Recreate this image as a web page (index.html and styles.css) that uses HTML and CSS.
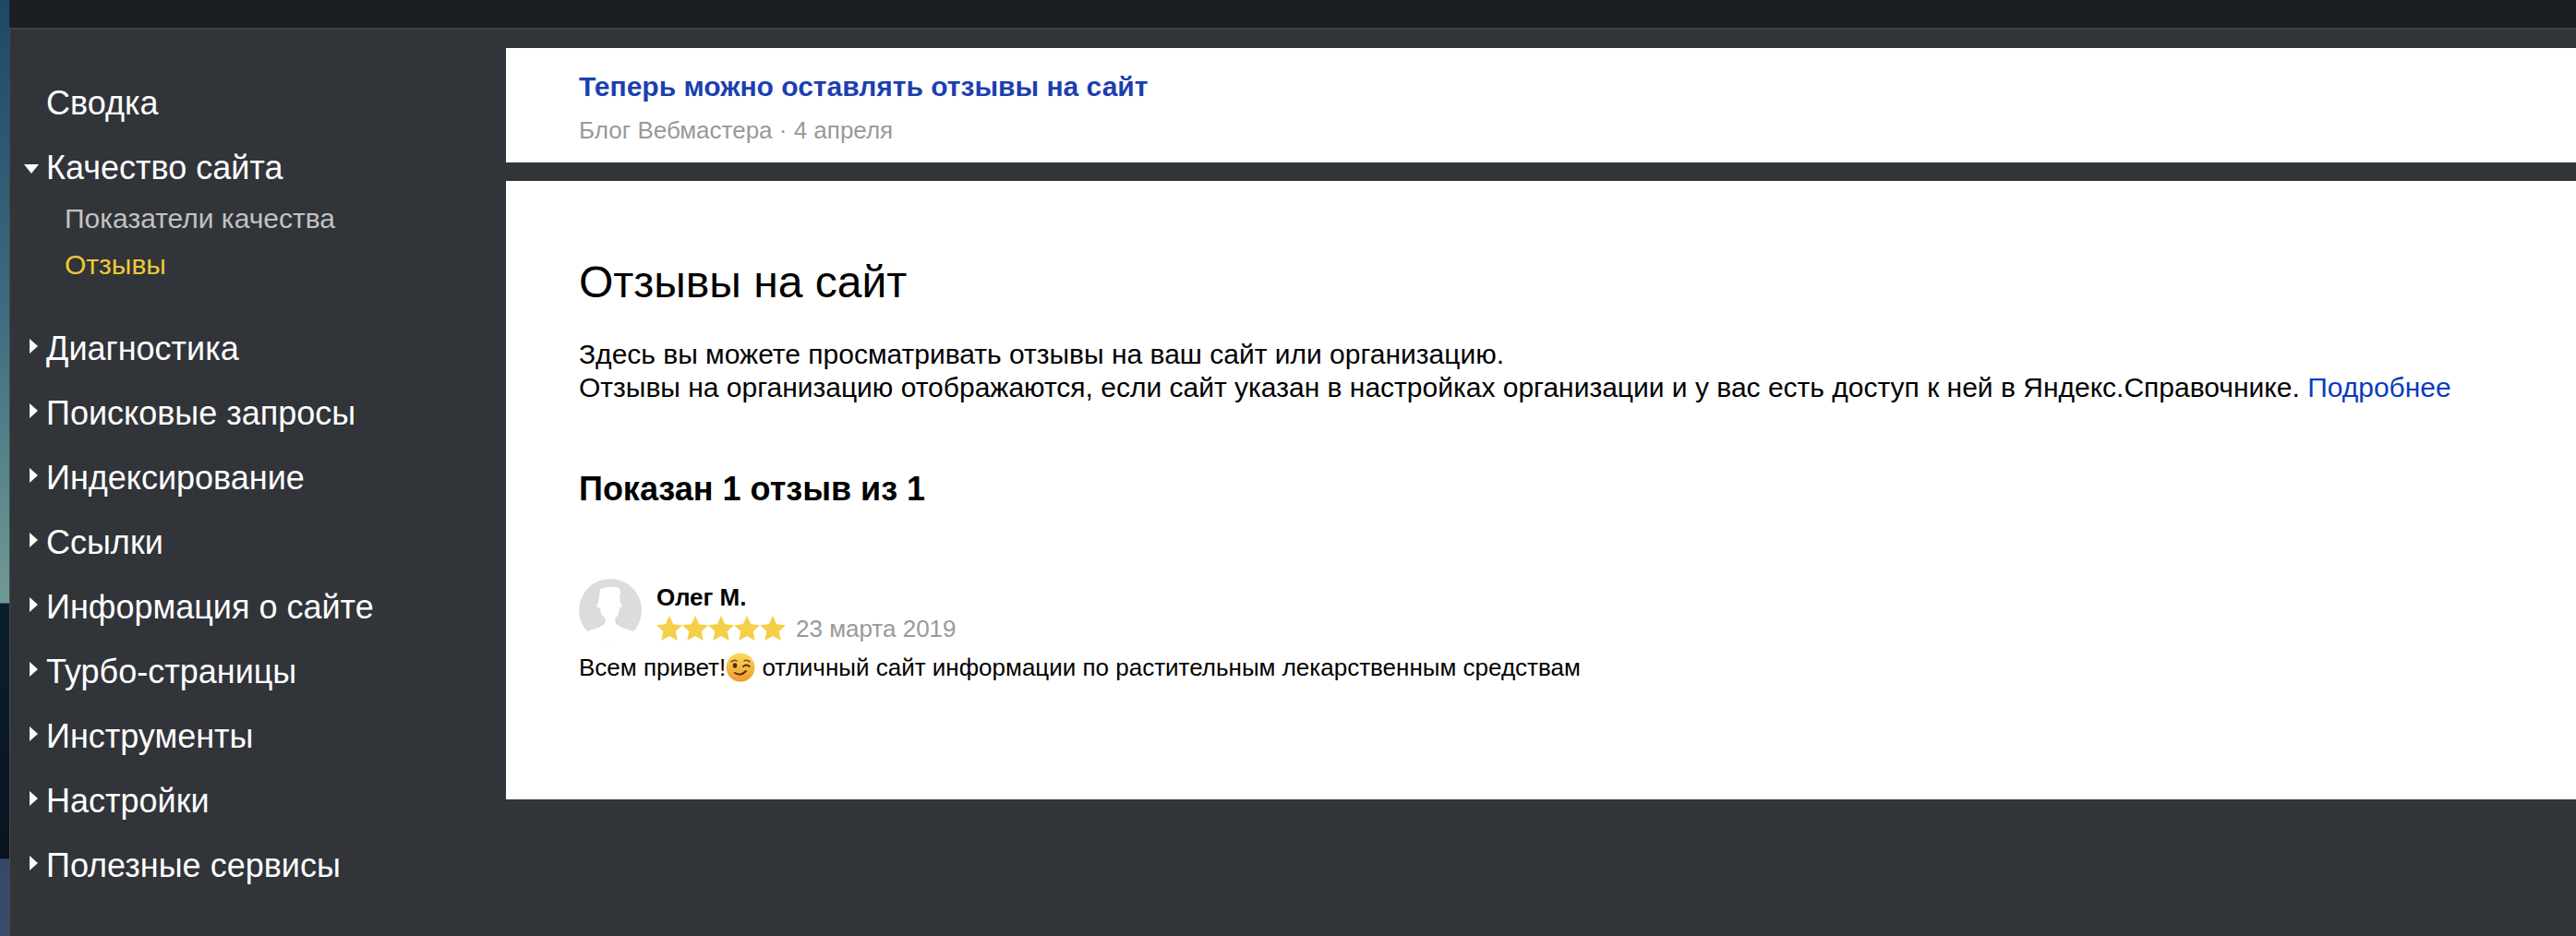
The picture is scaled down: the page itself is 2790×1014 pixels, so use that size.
FILE: index.html
```html
<!DOCTYPE html>
<html lang="ru">
<head>
<meta charset="utf-8">
<title>Отзывы на сайт</title>
<link rel="stylesheet" href="styles.css">
</head>
<body>
<div class="window">
  <header class="topbar"></header>
  <div class="layout">
    <nav class="sidebar">
      <a class="nav-item">Сводка</a>
      <a class="nav-item open">Качество сайта</a>
      <div class="subnav">
        <a class="sub-item">Показатели качества</a>
        <a class="sub-item active">Отзывы</a>
      </div>
      <a class="nav-item closed after-sub">Диагностика</a>
      <a class="nav-item closed">Поисковые запросы</a>
      <a class="nav-item closed">Индексирование</a>
      <a class="nav-item closed">Ссылки</a>
      <a class="nav-item closed">Информация о сайте</a>
      <a class="nav-item closed">Турбо-страницы</a>
      <a class="nav-item closed">Инструменты</a>
      <a class="nav-item closed">Настройки</a>
      <a class="nav-item closed">Полезные сервисы</a>
    </nav>
    <main class="content">
      <section class="news">
        <a class="news-title">Теперь можно оставлять отзывы на сайт</a>
        <div class="news-meta">Блог Вебмастера · 4 апреля</div>
      </section>
      <section class="card">
        <h1 class="title">Отзывы на сайт</h1>
        <p class="intro">Здесь вы можете просматривать отзывы на ваш сайт или организацию.<br>Отзывы на организацию отображаются, если сайт указан в настройках организации и у вас есть доступ к ней в Яндекс.Справочнике. <a class="link">Подробнее</a></p>
        <h2 class="count">Показан 1 отзыв из 1</h2>
        <article class="review">
          <div class="review-head">
            <svg class="avatar" viewBox="0 0 68 68" aria-hidden="true">
              <circle cx="34" cy="34" r="34" fill="#dcdcdc"/>
              <path d="M23 11q11-4 21-1l1 5-1 4 1 7 2 3-3 3-1 6-4 6 1 5 7 4 12 4 4 5q-10 6-29 6T5 62l4-5 12-4 7-4 1-5-5-6-1-6-4-2 2-5 1-6z" fill="#fff"/>
            </svg>
            <div class="review-info">
              <div class="author">Олег М.</div>
              <div class="rating">
                <svg class="stars" viewBox="0 0 140 28" aria-hidden="true">
                  <g fill="#f4cf47">
                    <path d="M14 0l4.200 9.200 9.800 1.100-7.300 6.700 2 9.900-8.700-5-8.700 5 2-9.900L0 10.300l9.800-1.100z"/>
                    <path transform="translate(28)" d="M14 0l4.200 9.200 9.800 1.100-7.300 6.700 2 9.900-8.700-5-8.700 5 2-9.900L0 10.300l9.800-1.100z"/>
                    <path transform="translate(56)" d="M14 0l4.200 9.200 9.800 1.100-7.300 6.700 2 9.900-8.700-5-8.700 5 2-9.900L0 10.300l9.800-1.100z"/>
                    <path transform="translate(84)" d="M14 0l4.200 9.200 9.800 1.100-7.300 6.700 2 9.900-8.700-5-8.700 5 2-9.900L0 10.300l9.800-1.100z"/>
                    <path transform="translate(112)" d="M14 0l4.200 9.200 9.800 1.100-7.300 6.700 2 9.900-8.700-5-8.700 5 2-9.900L0 10.300l9.800-1.100z"/>
                  </g>
                </svg>
                <span class="date">23 марта 2019</span>
              </div>
            </div>
          </div>
          <p class="review-text">Всем привет!<svg class="emoji" viewBox="0 0 32 32" aria-hidden="true">
              <defs><linearGradient id="face" x1="0" y1="0" x2="0" y2="1"><stop offset="0" stop-color="#fbd960"/><stop offset="1" stop-color="#f09a2c"/></linearGradient></defs>
              <circle cx="16" cy="16" r="15.500" fill="url(#face)"/>
              <path d="M6 10q3-3 6-1M20 9q3-2 6 1" fill="none" stroke="#7a4a16" stroke-width="1.500" stroke-linecap="round"/>
              <ellipse cx="10" cy="14" rx="2.300" ry="2.800" fill="#4a2c10"/>
              <path d="M19 15q3-3 7 0" fill="none" stroke="#4a2c10" stroke-width="1.800" stroke-linecap="round"/>
              <path d="M10 22q6 4 12-2" fill="none" stroke="#4a2c10" stroke-width="1.800" stroke-linecap="round"/>
            </svg> отличный сайт информации по растительным лекарственным средствам</p>
        </article>
      </section>
    </main>
  </div>
</div>
</body>
</html>
```
FILE: styles.css
```css
* { box-sizing: border-box; }
html, body { margin: 0; padding: 0; height: 100%; }
body {
  width: 2790px;
  height: 1014px;
  overflow: hidden;
  font-family: "Liberation Sans", Arial, sans-serif;
  background: linear-gradient(180deg, #1f4868 0%, #3c6a80 32%, #6f9a94 64.4%, #0a1e2e 64.5%, #0a1420 91.7%, #34486a 91.8%, #3a4c6c 100%);
  padding-left: 10px;
}
.window { height: 1014px; display: flex; flex-direction: column; background: #313439; }
.topbar { height: 32px; flex: none; background: #1b1e23; border-bottom: 2px solid #3d4045; }
.layout { flex: 1; display: flex; min-height: 0; }
.sidebar { width: 538px; flex: none; display: flex; flex-direction: column; padding: 58px 0 0 39px; border-left: 1px solid #46494e; }
.nav-item { display: block; position: relative; height: 70px; font-size: 36px; line-height: 44px; color: #fff; }
.nav-item.open::before {
  content: ""; position: absolute; left: -24px; top: 18px;
  border-left: 8px solid transparent; border-right: 8px solid transparent; border-top: 10px solid #fff;
}
.nav-item.closed::before {
  content: ""; position: absolute; left: -18px; top: 11px;
  border-top: 8px solid transparent; border-bottom: 8px solid transparent; border-left: 9px solid #fff;
}
.subnav { display: flex; flex-direction: column; margin-top: -18px; padding-left: 20px; }
.sub-item { display: block; height: 50px; font-size: 30px; line-height: 50px; color: #c2c2c2; }
.sub-item.active { color: #edc935; }
.after-sub { margin-top: 44px; }
.content { flex: 1; display: flex; flex-direction: column; padding-top: 20px; gap: 20px; min-width: 0; }
.news { height: 124px; background: #fff; padding: 22px 79px 0; }
.news-title { display: block; font-size: 30px; line-height: 40px; font-weight: bold; color: #1c3fb0; }
.news-meta { font-size: 26px; line-height: 36px; margin-top: 9px; color: #999; }
.card { height: 670px; background: #fff; padding: 82px 79px 0; }
.title { margin: 0; font-size: 48px; line-height: 56px; font-weight: normal; color: #000; }
.intro { margin: 32px 0 0; font-size: 30px; line-height: 36px; color: #000; }
.link { color: #0a3cc0; }
.count { margin: 70px 0 0; font-size: 36px; line-height: 44px; font-weight: bold; color: #000; }
.review { margin-top: 75px; }
.review-head { display: flex; gap: 16px; }
.avatar { width: 68px; height: 68px; flex: none; }
.review-info { display: flex; flex-direction: column; margin-top: 5px; }
.author { font-size: 26px; line-height: 30px; font-weight: bold; color: #000; }
.rating { display: flex; align-items: center; gap: 11px; margin-top: 2px; }
.stars { width: 140px; height: 28px; flex: none; }
.date { font-size: 26px; line-height: 34px; color: #999; }
.review-text { margin: 7px 0 0; font-size: 26px; line-height: 36px; color: #000; display: flex; align-items: center; white-space: pre; }
.emoji { width: 32px; height: 32px; flex: none; }
```
